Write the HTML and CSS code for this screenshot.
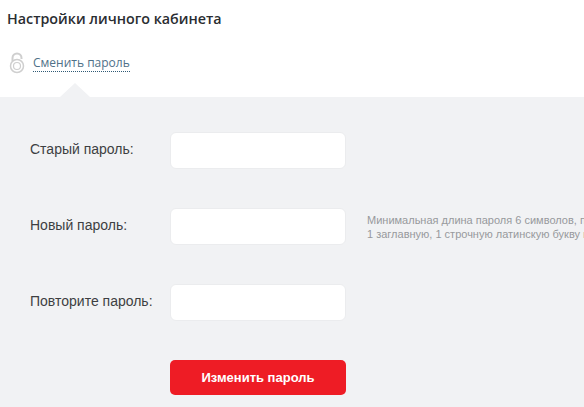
FILE: index.html
```html
<!DOCTYPE html>
<html lang="ru">
<head>
    <meta charset="utf-8">
    <title>Настройки личного кабинета</title>
    <link rel="stylesheet" href="styles.css">
</head>
<body>
    <div class="head">
        <h1 class="title">Настройки личного кабинета</h1>
        <div class="tab">
            <svg class="lock" width="16" height="22" viewBox="0 0 16 22" fill="none" stroke="#cfcfcf">
                <path d="M3.5 9V6a4.5 4.5 0 0 1 9 0v1" stroke-width="2"/>
                <circle cx="8" cy="14" r="6.5" stroke-width="1.5"/>
                <circle cx="8" cy="14" r="3.5" stroke-width="1.2"/>
            </svg>
            <a class="tab-link" href="#">Сменить пароль</a>
        </div>
    </div>
    <form class="panel">
        <div class="row">
            <label class="row-label">Старый пароль:</label>
            <input class="field" type="password">
        </div>
        <div class="row">
            <label class="row-label">Новый пароль:</label>
            <input class="field" type="password">
            <p class="hint">Минимальная длина пароля 6 символов, пароль должен содержать<br>1 заглавную, 1 строчную латинскую букву и 1 цифру</p>
        </div>
        <div class="row">
            <label class="row-label">Повторите пароль:</label>
            <input class="field" type="password">
        </div>
        <button class="submit" type="button">Изменить пароль</button>
    </form>
</body>
</html>
```

FILE: styles.css
```css
html, body {
    margin: 0;
    height: 407px;
    overflow: hidden;
}
body {
    width: 584px;
    background: #f1f2f4;
    font-family: "Liberation Sans", Arial, sans-serif;
    display: flex;
    flex-direction: column;
}
.head {
    background: #fff;
    height: 97px;
    padding: 9px 0 0 7px;
    box-sizing: border-box;
    position: relative;
}
.title {
    margin: 0;
    font-family: "Open Sans", sans-serif;
    font-size: 14.3px;
    line-height: 19px;
    font-weight: 600;
    color: #2a2d31;
}
.tab {
    display: flex;
    align-items: center;
    gap: 8px;
    margin-top: 23px;
    padding-left: 2px;
    height: 24px;
}
.lock {
    flex: none;
}
.tab-link {
    font-family: "Open Sans", sans-serif;
    font-size: 12px;
    line-height: 16px;
    color: #4f7188;
    text-decoration: none;
    border-bottom: 1px dotted #2f5a75;
}
.head::after {
    content: "";
    position: absolute;
    left: 60px;
    bottom: 0;
    border-left: 15px solid transparent;
    border-right: 15px solid transparent;
    border-bottom: 14px solid #f1f2f4;
}
.panel {
    flex: 1;
    padding: 35px 0 0 30px;
    overflow: hidden;
}
.row {
    display: flex;
    align-items: center;
    height: 37px;
    margin-bottom: 39px;
    white-space: nowrap;
}
.row-label {
    width: 140px;
    flex: none;
    padding-bottom: 4px;
    font-size: 14px;
    color: #3d3f42;
}
.field {
    width: 176px;
    height: 37px;
    flex: none;
    box-sizing: border-box;
    background: #fff;
    border: 1px solid #ebecee;
    border-radius: 6px;
    outline: none;
}
.hint {
    margin: 0 0 0 21px;
    font-size: 11px;
    line-height: 14px;
    color: #97999c;
}
.submit {
    display: block;
    width: 176px;
    height: 35px;
    margin: 0 0 0 140px;
    background: #ee1c25;
    border: none;
    border-radius: 5px;
    font-family: "Liberation Sans", Arial, sans-serif;
    font-size: 13px;
    font-weight: bold;
    color: #fff;
}
```
